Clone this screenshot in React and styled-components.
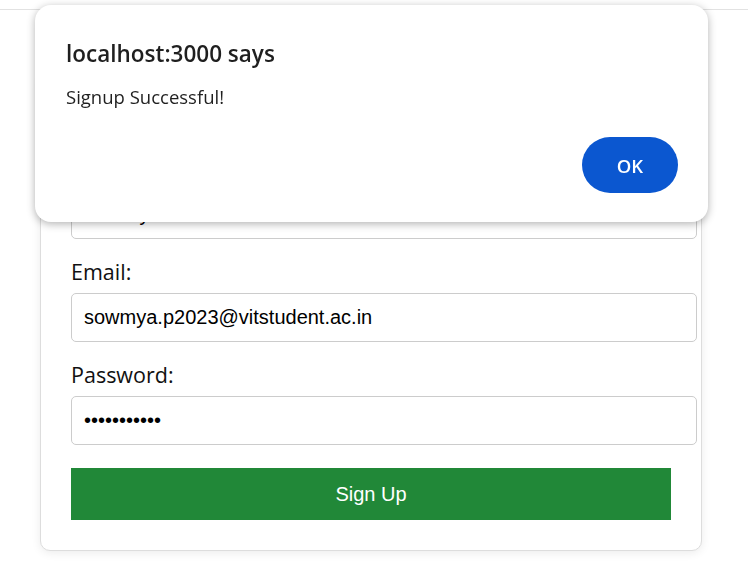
import React from 'react'
import styled, { createGlobalStyle } from 'styled-components'

const GlobalStyle = createGlobalStyle`
  body {
    margin: 0;
    background: #fff;
    font-family: 'Open Sans', 'Noto Sans', sans-serif;
    color: #222;
  }
`

const TopBar = styled.div`
  height: 9px;
  border-bottom: 1px solid #e2e2e2;
`

const Page = styled.div`
  padding: 62px 0 40px 40px;
`

const Card = styled.form`
  width: 600px;
  padding: 30px;
  border: 1px solid #ddd;
  border-radius: 10px;
  background: #fff;
  box-shadow: 0 2px 10px rgba(0, 0, 0, 0.08);
`

const Title = styled.h2`
  margin: 0 0 20px;
  font-size: 24px;
  line-height: 32px;
  text-align: center;
`

const Group = styled.div`
  margin-bottom: 19px;
`

const Label = styled.label`
  display: block;
  margin-bottom: 8px;
  font-size: 21.5px;
  line-height: 27px;
  color: #111;
`

const Input = styled.input`
  width: 100%;
  padding: 12px;
  border: 1px solid #ccc;
  border-radius: 5px;
  font-family: 'Liberation Sans', Arial, sans-serif;
  font-size: 20px;
  line-height: 23px;
  color: #000;
  outline: none;
`

const Submit = styled.button`
  display: block;
  width: 600px;
  height: 52px;
  margin-top: 23px;
  border: none;
  background: #218838;
  color: #fff;
  font-family: 'Liberation Sans', Arial, sans-serif;
  font-size: 20px;
`

const Dialog = styled.div`
  position: fixed;
  left: 35px;
  top: 5px;
  width: 673px;
  height: 217px;
  box-sizing: border-box;
  padding: 34px 30px 29px 31px;
  display: flex;
  flex-direction: column;
  background: #fff;
  border-radius: 16px;
  box-shadow: 0 2px 8px rgba(0, 0, 0, 0.3);
`

const DialogTitle = styled.div`
  font-size: 22.5px;
  font-weight: 600;
  line-height: 30px;
  color: #1f1f1f;
`

const DialogText = styled.div`
  margin-top: 15px;
  font-size: 18.5px;
  line-height: 25px;
  color: #1f1f1f;
`

const OkButton = styled.button`
  align-self: flex-end;
  margin-top: auto;
  width: 96px;
  height: 56px;
  border: none;
  border-radius: 28px;
  background: #0b57d0;
  color: #fff;
  font-family: 'Open Sans', sans-serif;
  font-size: 18.5px;
  font-weight: 600;
`

const fields = [
  { id: 'name', label: 'Name:', type: 'text', value: 'Sowmya' },
  { id: 'email', label: 'Email:', type: 'email', value: 'sowmya.p2023@vitstudent.ac.in' },
  { id: 'password', label: 'Password:', type: 'password', value: 'sowmya12345' },
]

const App = () => (
  <>
    <GlobalStyle />
    <TopBar />
    <Page>
      <Card onSubmit={(e) => e.preventDefault()}>
        <Title>Sign Up</Title>
        {fields.map((f) => (
          <Group key={f.id}>
            <Label htmlFor={f.id}>{f.label}</Label>
            <Input id={f.id} type={f.type} defaultValue={f.value} />
          </Group>
        ))}
        <Submit type="submit">Sign Up</Submit>
      </Card>
    </Page>
    <Dialog role="alertdialog">
      <DialogTitle>localhost:3000 says</DialogTitle>
      <DialogText>Signup Successful!</DialogText>
      <OkButton type="button">OK</OkButton>
    </Dialog>
  </>
)

export default App
